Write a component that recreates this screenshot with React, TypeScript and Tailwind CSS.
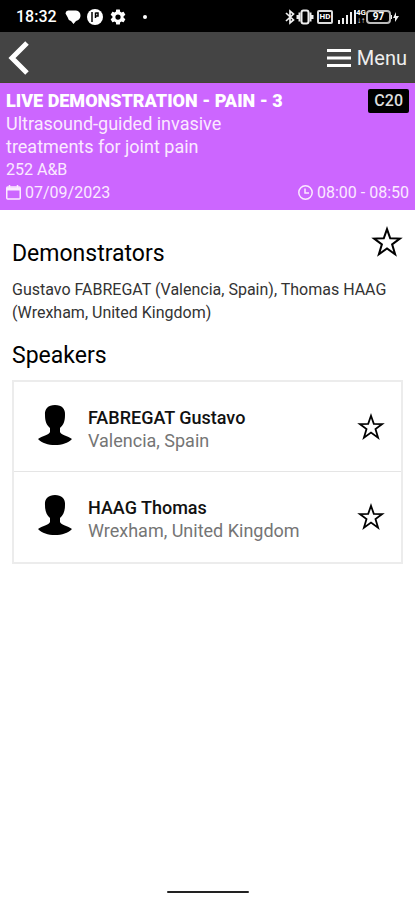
import { useState } from "react";

type Speaker = { name: string; place: string };

const speakers: Speaker[] = [
  { name: "FABREGAT Gustavo", place: "Valencia, Spain" },
  { name: "HAAG Thomas", place: "Wrexham, United Kingdom" },
];

function StarButton({ label, size }: { label: string; size: string }) {
  const [on, setOn] = useState(false);
  return (
    <button type="button" aria-label={label} aria-pressed={on} onClick={() => setOn(!on)} className="block shrink-0">
      <svg viewBox="0 0 30 30" className={size} fill={on ? "#000" : "none"} stroke="#000" strokeWidth="1.9" strokeLinejoin="miter">
        <path d="M15 3 L18 11.600 L27 11.800 L19.800 17.200 L22.600 26.500 L15 21 L7.400 26.500 L10.200 17.200 L3 11.800 L12 11.600 Z" />
      </svg>
    </button>
  );
}

function StatusBar() {
  return (
    <div className="flex h-8 items-center justify-between bg-black pl-4 pr-4 pt-0.5 text-white">
      <div className="flex items-center">
        <span className="text-[16px] font-medium leading-5">18:32</span>
        <svg viewBox="0 0 16 16" className="ml-2 h-4 w-4" fill="#fff">
          <path d="M3 1.500 H11 Q15.500 2 15.500 7 Q15 11 11 12 L8.500 15 L6 12 Q3 11 2.500 8 L0.500 4.500 Q0.500 2 3 1.500Z" />
        </svg>
        <svg viewBox="0 0 16 16" className="ml-1.5 h-4 w-4">
          <circle cx="8" cy="8" r="8" fill="#fff" />
          <path d="M5 3 V13 M8.500 3.500 V9 M8.500 4 H11 V7 H8.500" fill="none" stroke="#000" strokeWidth="1.500" />
        </svg>
        <svg viewBox="0 0 24 24" className="ml-1.5 h-[18px] w-[18px]" fill="#fff">
          <path d="M19.430 12.980c.04-.32.07-.64.07-.98s-.03-.66-.07-.98l2.110-1.650c.19-.15.24-.42.12-.64l-2-3.460c-.12-.22-.39-.3-.61-.22l-2.490 1c-.52-.4-1.080-.73-1.690-.98l-.38-2.650C14.460 2.180 14.250 2 14 2h-4c-.25 0-.46.18-.49.42l-.38 2.650c-.61.25-1.170.59-1.690.98l-2.490-1c-.23-.09-.49 0-.61.22l-2 3.460c-.13.22-.07.49.12.64l2.110 1.650c-.04.32-.07.65-.07.98s.03.66.07.98l-2.110 1.650c-.19.15-.24.42-.12.64l2 3.460c.12.22.39.3.61.22l2.490-1c.52.4 1.080.73 1.690.98l.38 2.650c.03.24.24.42.49.42h4c.25 0 .46-.18.49-.42l.38-2.650c.61-.25 1.170-.59 1.690-.98l2.490 1c.23.09.49 0 .61-.22l2-3.460c.12-.22.07-.49-.12-.64zM12 15.500A3.500 3.500 0 1 1 12 8.500a3.500 3.500 0 0 1 0 7z" />
        </svg>
        <span className="ml-4 h-1 w-1 rounded-full bg-white" />
      </div>
      <div className="flex items-center">
        <svg viewBox="0 0 12 16" className="h-4 w-3" fill="none" stroke="#eee" strokeWidth="1.700">
          <path d="M2 4 L9.500 11 L6 14 V2 L9.500 5 L2 12" />
        </svg>
        <svg viewBox="0 0 18 16" className="h-4 w-[18px]" fill="none" stroke="#eee">
          <path d="M3.500 3.500 V12.500 M14.500 3.500 V12.500 M1.500 6 V10 M16.500 6 V10" strokeWidth="2" />
          <rect x="5.500" y="1.500" width="7" height="13" rx="2" strokeWidth="2" />
        </svg>
        <span className="ml-[3px] flex h-[14px] w-4 items-center justify-center rounded-xs border-2 border-[#ddd] text-[8px] font-bold leading-none">
          HD
        </span>
        <svg viewBox="0 0 18 16" className="ml-[5px] h-4 w-[18px]" fill="#eee">
          <path d="M0 11h2v4H0zM4 9h2v6H4zM8 6h2v9H8zM12 3h2v12h-2zM16 1h2v14h-2z" />
        </svg>
        <span className="flex flex-col items-center text-[8px] font-bold leading-none">
          <span>4G</span>
          <span>↓↑</span>
        </span>
        <span className="flex h-[14px] w-[25px] items-center justify-center rounded-sm border-2 border-[#bbb] text-[10px] font-bold leading-none">
          97
        </span>
        <svg viewBox="0 0 8 12" className="h-3 w-2" fill="#eee">
          <path d="M0 4h1v4H0zM5 1 L2 7h2v4l4-6H5z" />
        </svg>
      </div>
    </div>
  );
}

function SpeakerRow({ name, place }: Speaker) {
  return (
    <li className="flex h-[90px] items-center pl-6 pr-4">
      <svg viewBox="0 0 34 40" className="mb-1 h-10 w-[34px] shrink-0" fill="#000">
        <path d="M17 0 C24 0 27.500 4 27 10 C27 16 25.500 20 22 23 V27 C23 30 30 31 34 34 C30 38 24 40 17 40 C10 40 4 38 0 34 C4 31 11 30 12 27 V23 C8.500 20 7 16 7 10 C6.500 4 10 0 17 0Z" />
      </svg>
      <div className="ml-4 mt-1 min-w-0 flex-1 text-[18px] leading-[23px]">
        <p className="font-medium text-[#111]">{name}</p>
        <p className="text-[#757575]">{place}</p>
      </div>
      <StarButton label={`Add ${name} to favourites`} size="h-7 w-7" />
    </li>
  );
}

export default function App() {
  return (
    <div className="flex min-h-screen flex-col bg-white font-[Roboto,sans-serif] text-black">
      <StatusBar />
      <nav className="flex h-[51px] items-center justify-between border-b border-[#444433] bg-[#444] px-2 pt-0.5 text-white">
        <button type="button" aria-label="Back">
          <svg viewBox="0 0 22 34" className="h-[34px] w-[22px]" fill="none" stroke="#fff" strokeWidth="5">
            <path d="M19 2 L4 17 L19 32" />
          </svg>
        </button>
        <button type="button" className="flex items-center gap-1.5 text-[20px] leading-6 text-[#eee]">
          <svg viewBox="0 0 24 18" className="h-[18px] w-6" fill="#fff">
            <path d="M0 0h24v3H0zM0 7.500h24v3H0zM0 15h24v3H0z" />
          </svg>
          Menu
        </button>
      </nav>
      <header className="bg-[#cc66ff] px-1.5 pb-1.5 pt-1.5 text-[#fbeaff]">
        <div className="flex items-start justify-between">
          <div>
            <h1 className="text-[18px] font-black leading-[23px] text-white">LIVE DEMONSTRATION - PAIN - 3</h1>
            <p className="w-64 text-[18px] leading-[23px]">Ultrasound-guided invasive treatments for joint pain</p>
          </div>
          <span className="rounded-xs bg-black px-1.5 text-[16px] font-medium leading-6 text-[#ddd]">C20</span>
        </div>
        <p className="text-[16px] leading-[23px]">252 A&amp;B</p>
        <div className="flex items-center justify-between text-[16px] leading-[23px]">
          <span className="flex items-center gap-1">
            <svg viewBox="0 0 15 15" className="h-[15px] w-[15px]" fill="none" stroke="#fbeaff">
              <rect x="0.750" y="2" width="13.500" height="12" rx="1" strokeWidth="1.500" />
              <path d="M1 4 H14" strokeWidth="3" />
              <path d="M3.500 0 V3 M11.500 0 V3" strokeWidth="1.500" />
            </svg>
            07/09/2023
          </span>
          <span className="flex items-center gap-1">
            <svg viewBox="0 0 15 15" className="h-[15px] w-[15px]" fill="none" stroke="#fbeaff" strokeWidth="1.500">
              <circle cx="7.500" cy="7.500" r="6.700" />
              <path d="M7 3.500 V8 H11" />
            </svg>
            08:00 - 08:50
          </span>
        </div>
      </header>
      <main className="flex-1 px-3 pt-4">
        <div className="flex items-start justify-between">
          <h2 className="mt-[14px] text-[23px] leading-7">Demonstrators</h2>
          <StarButton label="Add session to favourites" size="h-8 w-8" />
        </div>
        <p className="mt-2.5 text-[16px] leading-[23px] text-[#333]">
          Gustavo FABREGAT (Valencia, Spain), Thomas HAAG (Wrexham, United Kingdom)
        </p>
        <h2 className="mt-[18px] text-[23px] leading-7">Speakers</h2>
        <ul className="mt-2.5 divide-y divide-[#e5e5e5] border-2 border-[#ececec]">
          {speakers.map((s) => (
            <SpeakerRow key={s.name} {...s} />
          ))}
        </ul>
      </main>
      <footer className="flex justify-center pb-[7px]">
        <span className="h-0.5 w-[82px] rounded-full bg-[#222]" />
      </footer>
    </div>
  );
}
